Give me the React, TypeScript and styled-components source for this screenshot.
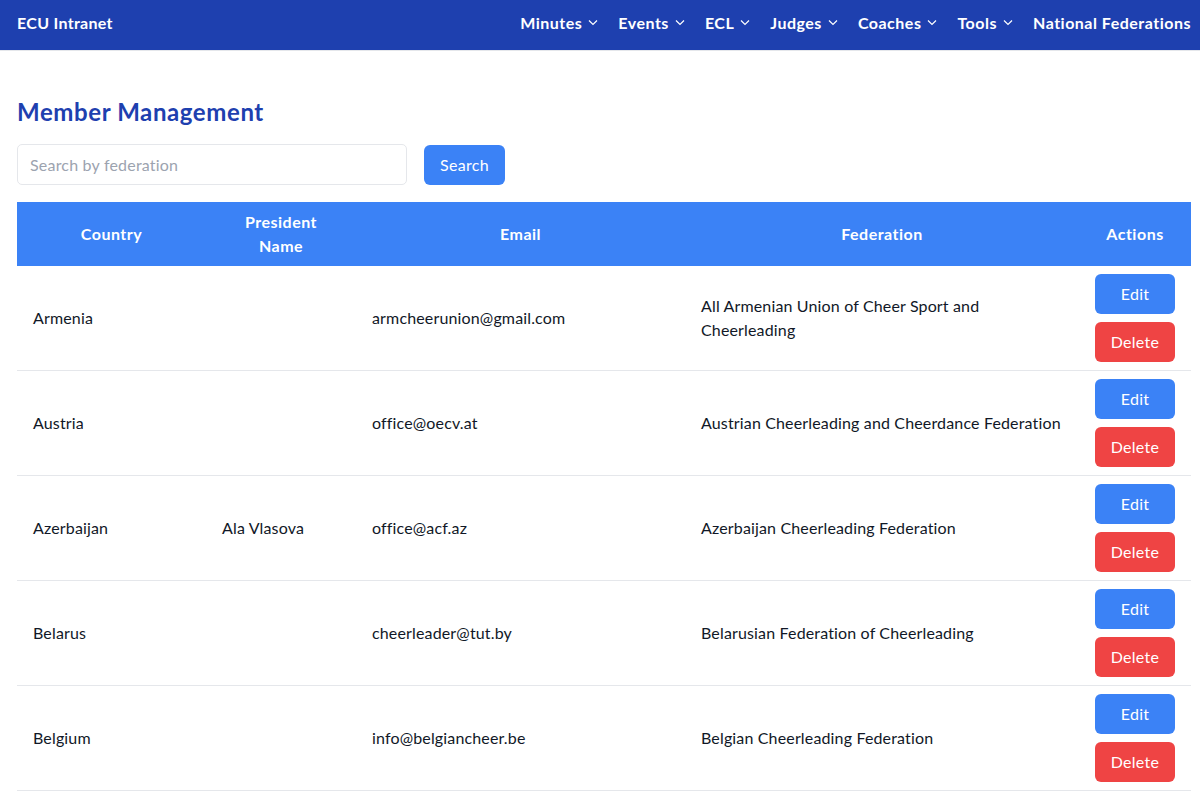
import React from "react";
import styled, { createGlobalStyle } from "styled-components";

const Global = createGlobalStyle`
  * { box-sizing: border-box; }
  body { margin: 0; font-family: "Lato", "Noto Sans", sans-serif; color: #111827; background: #fff; letter-spacing: 0.15px; }
`;

const Nav = styled.nav`
  height: 51px;
  background: #1e40af;
  border-bottom: 1px solid #e5e7eb;
  display: flex;
  align-items: center;
  justify-content: space-between;
  padding: 0 9px 6px 17px;
  color: #fff;
`;

const Brand = styled.div`
  font-size: 16px;
  font-weight: 700;
  letter-spacing: 0.3px;
`;

const Menu = styled.ul`
  list-style: none;
  margin: 0;
  padding: 0;
  display: flex;
  gap: 19px;
`;

const MenuItem = styled.li`
  display: flex;
  align-items: center;
  gap: 5px;
  font-size: 16px;
  font-weight: 700;
  letter-spacing: 0.5px;
`;

const Chevron = () => (
  <svg width="12" height="12" viewBox="0 0 12 12" fill="none" stroke="#fff" strokeWidth="1.2">
    <path d="M2 4.5l4 4 4-4" />
  </svg>
);

const Main = styled.main`
  padding: 45px 9px 0 17px;
`;

const Title = styled.h1`
  margin: 0 0 16px;
  font-size: 24px;
  line-height: 32px;
  font-weight: 700;
  letter-spacing: 0.6px;
  color: #1e40af;
`;

const SearchRow = styled.div`
  display: flex;
  align-items: center;
  gap: 17px;
  margin-bottom: 17px;
`;

const Input = styled.input`
  width: 390px;
  height: 41px;
  border: 1px solid #e5e7eb;
  border-radius: 5px;
  padding: 0 12px;
  font-family: inherit;
  font-size: 16px;
  letter-spacing: 0.2px;
  color: #111827;
  outline: none;
  &::placeholder { color: #9ca3af; }
`;

const Button = styled.button<{ $variant?: "blue" | "red" }>`
  border: none;
  border-radius: 6px;
  background: ${(p) => (p.$variant === "red" ? "#ef4444" : "#3b82f6")};
  color: #fff;
  font-family: inherit;
  font-size: 16px;
  letter-spacing: 0.3px;
  height: 40px;
  padding: 0 16px 1px;
  cursor: pointer;
`;

const ActionButton = styled(Button)`
  width: 80px;
  padding: 0 0 2px;
`;

const Table = styled.table`
  width: 1174px;
  border-collapse: collapse;
  table-layout: fixed;
`;

const Th = styled.th`
  background: #3b82f6;
  color: #fff;
  font-weight: 700;
  font-size: 16px;
  line-height: 24px;
  letter-spacing: 0.5px;
  text-align: center;
  padding: 8px 16px 8px;
`;

const Tr = styled.tr`
  border-bottom: 1px solid #e5e7eb;
`;

const Td = styled.td`
  padding: 8px 16px;
  font-size: 16px;
  line-height: 24px;
  letter-spacing: 0.15px;
  vertical-align: middle;
  color: #111827;
`;

const Actions = styled.div`
  display: flex;
  flex-direction: column;
  gap: 8px;
`;

const rows = [
  { country: "Armenia", president: "", email: "armcheerunion@gmail.com", fed: "All Armenian Union of Cheer Sport and Cheerleading" },
  { country: "Austria", president: "", email: "office@oecv.at", fed: "Austrian Cheerleading and Cheerdance Federation" },
  { country: "Azerbaijan", president: "Ala Vlasova", email: "office@acf.az", fed: "Azerbaijan Cheerleading Federation" },
  { country: "Belarus", president: "", email: "cheerleader@tut.by", fed: "Belarusian Federation of Cheerleading" },
  { country: "Belgium", president: "", email: "info@belgiancheer.be", fed: "Belgian Cheerleading Federation" },
];

const menu = ["Minutes", "Events", "ECL", "Judges", "Coaches", "Tools"];

export default function App() {
  return (
    <>
      <Global />
      <Nav>
        <Brand>ECU Intranet</Brand>
        <Menu>
          {menu.map((m) => (
            <MenuItem key={m}>
              {m}
              <Chevron />
            </MenuItem>
          ))}
          <MenuItem>National Federations</MenuItem>
        </Menu>
      </Nav>
      <Main>
        <Title>Member Management</Title>
        <SearchRow>
          <Input placeholder="Search by federation" />
          <Button>Search</Button>
        </SearchRow>
        <Table>
          <colgroup>
            <col style={{ width: 189 }} />
            <col style={{ width: 150 }} />
            <col style={{ width: 329 }} />
            <col style={{ width: 394 }} />
            <col style={{ width: 112 }} />
          </colgroup>
          <thead>
            <tr>
              <Th>Country</Th>
              <Th>President<br />Name</Th>
              <Th>Email</Th>
              <Th>Federation</Th>
              <Th>Actions</Th>
            </tr>
          </thead>
          <tbody>
            {rows.map((r) => (
              <Tr key={r.country}>
                <Td>{r.country}</Td>
                <Td>{r.president}</Td>
                <Td>{r.email}</Td>
                <Td>{r.fed}</Td>
                <Td>
                  <Actions>
                    <ActionButton>Edit</ActionButton>
                    <ActionButton $variant="red">Delete</ActionButton>
                  </Actions>
                </Td>
              </Tr>
            ))}
          </tbody>
        </Table>
      </Main>
    </>
  );
}
